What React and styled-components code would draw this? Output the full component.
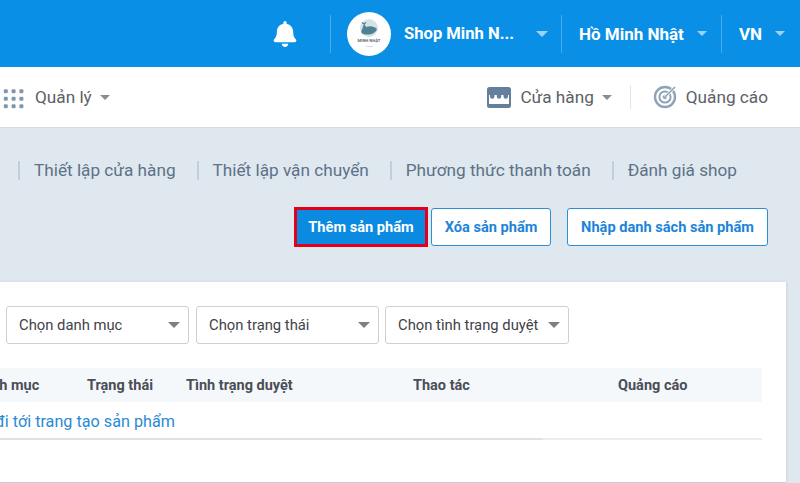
import React from 'react';
import styled, { createGlobalStyle } from 'styled-components';
import { FaBell } from 'react-icons/fa';

const GlobalStyle = createGlobalStyle`
  html, body {
    margin: 0;
    padding: 0;
    overflow: hidden;
  }
  body {
    font-family: Roboto, "Liberation Sans", sans-serif;
    background: #dfe7ef;
  }
`;

const Page = styled.div`
  width: 800px;
  height: 483px;
  overflow: hidden;
  display: flex;
  flex-direction: column;
`;

const TopBar = styled.header`
  height: 67px;
  flex: none;
  background: #0a8fe6;
  display: flex;
  align-items: center;
  color: #fff;
  padding-left: 272px;
`;

const BellWrap = styled.div`
  width: 58px;
  display: flex;
  align-items: center;
  font-size: 26px;
  line-height: 0;
`;

const TopGroup = styled.div`
  display: flex;
  align-items: center;
  height: 38px;
  padding-left: ${(p) => p.$left}px;
  width: ${(p) => p.$width}px;
  border-left: 1px solid #4aabea;
  box-sizing: border-box;
`;

const Avatar = styled.div`
  width: 44px;
  height: 44px;
  border-radius: 50%;
  background: #fff;
  flex: none;
  margin-right: 13px;
  display: flex;
  align-items: center;
  justify-content: center;
`;

const TopLabel = styled.span`
  font-size: ${(p) => p.$size || 17}px;
  font-weight: 700;
  white-space: nowrap;
  width: ${(p) => p.$width}px;
`;

const Caret = styled.i`
  display: block;
  flex: none;
  width: 0;
  height: 0;
  border-left: ${(p) => p.$size}px solid transparent;
  border-right: ${(p) => p.$size}px solid transparent;
  border-top: ${(p) => p.$size}px solid ${(p) => p.$color};
  margin-left: ${(p) => p.$left}px;
`;

const SubBar = styled.nav`
  height: 60px;
  flex: none;
  background: #fff;
  border-bottom: 1px solid #d3dbe3;
  display: flex;
  align-items: center;
  padding-left: 3px;
  padding-right: 32px;
  color: #5d6068;
  font-size: 17.2px;
`;

const SubItem = styled.div`
  display: flex;
  align-items: center;
  white-space: nowrap;
`;

const SubIcon = styled.span`
  display: flex;
  line-height: 0;
  margin-right: ${(p) => p.$gap}px;
`;

const SubSpacer = styled.div`
  flex: 1;
`;

const SubDivider = styled.div`
  width: 1px;
  height: 24px;
  background: #e3e6ea;
  margin: 0 22px 0 18px;
`;

const Tabs = styled.div`
  display: flex;
  align-items: center;
  padding: 30px 0 0 18px;
  height: 25px;
  color: #5c7287;
  font-size: 17.2px;
`;

const Tab = styled.div`
  border-left: 2px solid #c3ced8;
  padding-left: 14px;
  line-height: 19px;
  margin-right: ${(p) => p.$right}px;
  white-space: nowrap;
`;

const ActionRow = styled.div`
  display: flex;
  align-items: center;
  justify-content: flex-end;
  margin-top: 24px;
  padding-right: 32px;
  height: 40px;
`;

const ActionButton = styled.button`
  box-sizing: border-box;
  height: 38px;
  width: ${(p) => p.$width}px;
  margin-left: ${(p) => p.$left}px;
  border: 1px solid #2d8fd6;
  border-radius: 3px;
  background: #fff;
  color: #1d84d8;
  font: 700 14.6px Roboto, sans-serif;
  padding: 0;
`;

const PrimaryButton = styled(ActionButton)`
  height: 40px;
  border: 3px solid #e2001a;
  border-radius: 0;
  background: #0a8ae0;
  color: #fff;
`;

const Card = styled.section`
  background: #fff;
  margin: 35px 14px 0 -40px;
  flex: 1;
  padding-top: 24px;
  padding-right: 24px;
  border-bottom: 1px solid #c5d0da;
  box-shadow: 1px 0 2px #ccd6df;
`;

const Filters = styled.div`
  display: flex;
  padding-left: 46px;
`;

const Select = styled.div`
  box-sizing: border-box;
  width: ${(p) => p.$width}px;
  height: 38px;
  margin-right: ${(p) => p.$right}px;
  border: 1px solid #cfcfcf;
  border-radius: 3px;
  display: flex;
  align-items: center;
  justify-content: space-between;
  padding: 0 8px 0 12px;
  color: #3f4249;
  font-size: 14.8px;
  white-space: nowrap;
`;

const TableHead = styled.div`
  margin-top: 24px;
  height: 34px;
  background: #f5f8fb;
  display: grid;
  grid-template-columns: 127px 99px 227px 205px 1fr;
  align-items: center;
  color: #4a4e57;
  font-size: 14.5px;
  font-weight: 700;
`;

const HeadCell = styled.div`
  padding-left: ${(p) => p.$pad || 0}px;
  white-space: nowrap;
`;

const TableRow = styled.div`
  height: 34px;
  padding: 2px 0 0 35px;
  display: flex;
  align-items: center;
  border-bottom: 2px solid #ebedef;
  position: relative;
`;

const RowShade = styled.div`
  position: absolute;
  left: 0;
  bottom: -2px;
  width: 583px;
  height: 2px;
  background: #dfe1e3;
`;

const RowLink = styled.a`
  color: #2a8ad4;
  font-size: 16.2px;
  white-space: nowrap;
`;

const GridIcon = () => (
  <svg width="21" height="24" viewBox="0 0 21 24" fill="#7f96ac">
    {[0.8, 8.6, 16.4].map((x) =>
      [4.3, 11.8, 19.3].map((y) => (
        <rect key={`${x}-${y}`} x={x} y={y} width="4" height="4" rx="1.2" />
      ))
    )}
  </svg>
);

const StoreIcon = () => (
  <svg width="24" height="21" viewBox="0 0 24 21">
    <rect x="1" y="1" width="22" height="19" rx="1.5" fill="#fff" stroke="#64809c" strokeWidth="2" />
    <path d="M1 1h22v7H1z" fill="#64809c" />
    <path d="M3 8h4.5v1.5a2.2 2.2 0 0 1-4.5 0zM9.8 8h4.4v1.5a2.2 2.2 0 0 1-4.4 0zM16.5 8H21v1.5a2.2 2.2 0 0 1-4.5 0z" fill="#64809c" />
    <path d="M1 17h22v3H1z" fill="#64809c" />
  </svg>
);

const TargetIcon = () => (
  <svg width="24" height="24" viewBox="0 0 24 24" fill="none" stroke="#8ea3b6">
    <circle cx="12" cy="12" r="10" strokeWidth="2.4" />
    <circle cx="12" cy="12" r="5.6" strokeWidth="2" />
    <circle cx="12" cy="12" r="1.8" fill="#8ea3b6" strokeWidth="1" />
    <path d="M12 12L21 3" stroke="#fff" strokeWidth="3" />
    <path d="M12 12L22 2" strokeWidth="1.6" />
  </svg>
);

const ShopLogo = () => (
  <svg width="36" height="36" viewBox="0 0 36 36">
    <circle cx="18" cy="12" r="9" fill="#d5e2e6" />
    <path d="M10 16c1.500-3 2-6 3-8c1.500 1 1.500 2 2 3c4-1.500 8-1 11 2c-1.500 4-6 6-10 5.500c-3 0-5-.5-6-2.500z" fill="#4f8196" />
    <path d="M13 8l-2-1.500M13 8l2-1.500" stroke="#4f8196" strokeWidth="1.200" />
    <text x="18" y="26" textAnchor="middle" fontSize="4.2" fontWeight="700" fill="#5b6a73">MINH NHẬT</text>
    <text x="18" y="31" textAnchor="middle" fontSize="2.4" fill="#a0abb0">FLORA</text>
  </svg>
);

export default function App() {
  return (
    <Page>
      <GlobalStyle />
      <TopBar>
        <BellWrap><FaBell /></BellWrap>
        <TopGroup $left={16} $width={231}>
          <Avatar><ShopLogo /></Avatar>
          <TopLabel $width={110} $size={16.6}>Shop Minh N...</TopLabel>
          <Caret $size={6.5} $color="#9dd2f5" $left={22} />
        </TopGroup>
        <TopGroup $left={17} $width={160}>
          <TopLabel>Hồ Minh Nhật</TopLabel>
          <Caret $size={5.5} $color="#9dd2f5" $left={13} />
        </TopGroup>
        <TopGroup $left={17} $width={79}>
          <TopLabel>VN</TopLabel>
          <Caret $size={5.5} $color="#9dd2f5" $left={13} />
        </TopGroup>
      </TopBar>

      <SubBar>
        <SubItem>
          <SubIcon $gap={11}><GridIcon /></SubIcon>
          Quản lý
          <Caret $size={5} $color="#8a8d93" $left={8} />
        </SubItem>
        <SubSpacer />
        <SubItem>
          <SubIcon $gap={9}><StoreIcon /></SubIcon>
          Cửa hàng
          <Caret $size={5} $color="#8a8d93" $left={8} />
        </SubItem>
        <SubDivider />
        <SubItem>
          <SubIcon $gap={9}><TargetIcon /></SubIcon>
          Quảng cáo
        </SubItem>
      </SubBar>

      <Tabs>
        <Tab $right={21}>Thiết lập cửa hàng</Tab>
        <Tab $right={21}>Thiết lập vận chuyển</Tab>
        <Tab $right={21}>Phương thức thanh toán</Tab>
        <Tab>Đánh giá shop</Tab>
      </Tabs>

      <ActionRow>
        <PrimaryButton $width={134}>Thêm sản phẩm</PrimaryButton>
        <ActionButton $width={120} $left={3}>Xóa sản phẩm</ActionButton>
        <ActionButton $width={201} $left={16}>Nhập danh sách sản phẩm</ActionButton>
      </ActionRow>

      <Card>
        <Filters>
          <Select $width={183} $right={7}>
            Chọn danh mục
            <Caret $size={6} $color="#808080" />
          </Select>
          <Select $width={183} $right={6}>
            Chọn trạng thái
            <Caret $size={6} $color="#808080" />
          </Select>
          <Select $width={184}>
            Chọn tình trạng duyệt
            <Caret $size={6} $color="#808080" />
          </Select>
        </Filters>
        <TableHead>
          <HeadCell $pad={14}>Danh mục</HeadCell>
          <HeadCell>Trạng thái</HeadCell>
          <HeadCell>Tình trạng duyệt</HeadCell>
          <HeadCell>Thao tác</HeadCell>
          <HeadCell>Quảng cáo</HeadCell>
        </TableHead>
        <TableRow>
          <RowLink>đi tới trang tạo sản phẩm</RowLink>
          <RowShade />
        </TableRow>
      </Card>
    </Page>
  );
}
